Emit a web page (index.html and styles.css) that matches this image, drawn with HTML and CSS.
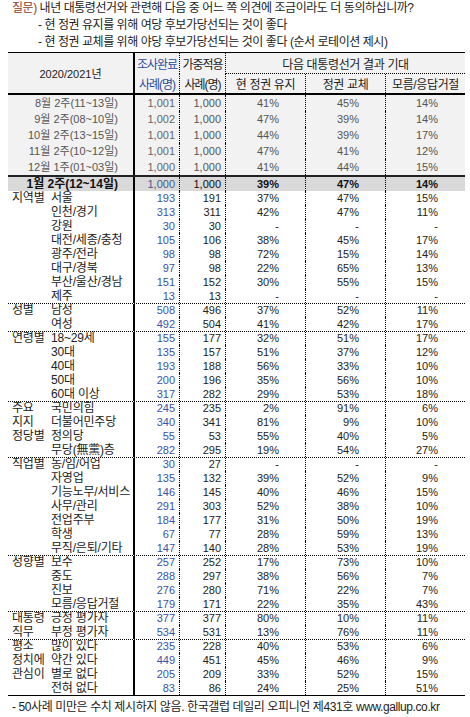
FILE: index.html
```html
<!DOCTYPE html>
<html lang="ko">
<head>
<meta charset="utf-8">
<link rel="stylesheet" href="styles.css">
</head>
<body>
<div class="q">
  <div><span class="tag">질문)</span> 내년 대통령선거와 관련해 다음 중 어느 쪽 의견에 조금이라도 더 동의하십니까?</div>
  <div class="ind">- 현 정권 유지를 위해 여당 후보가당선되는 것이 좋다</div>
  <div class="ind">- 현 정권 교체를 위해 야당 후보가당선되는 것이 좋다 (순서 로테이션 제시)</div>
</div>

<div class="tbl">
  <div class="head">
    <div class="h-lab">2020/2021년</div>
    <div class="h-n1 blue">조사완료</div>
    <div class="h-n2">가중적용</div>
    <div class="h-res">다음 대통령선거 결과 기대</div>
    <div class="h-n1 blue">사례(명)</div>
    <div class="h-n2">사례(명)</div>
    <div class="h-p d">현 정권 유지</div>
    <div class="h-p d">정권 교체</div>
    <div class="h-p">모름/응답거절</div>
  </div>

  <div class="row trend"><div class="c-lab">8월 2주(11~13일)</div><div class="c-n1">1,001</div><div class="c-n2">1,000</div><div class="c-p d">41%</div><div class="c-p d">45%</div><div class="c-p">14%</div></div>
  <div class="row trend"><div class="c-lab">9월 2주(08~10일)</div><div class="c-n1">1,002</div><div class="c-n2">1,000</div><div class="c-p d">47%</div><div class="c-p d">39%</div><div class="c-p">14%</div></div>
  <div class="row trend"><div class="c-lab">10월 2주(13~15일)</div><div class="c-n1">1,001</div><div class="c-n2">1,000</div><div class="c-p d">44%</div><div class="c-p d">39%</div><div class="c-p">17%</div></div>
  <div class="row trend"><div class="c-lab">11월 2주(10~12일)</div><div class="c-n1">1,001</div><div class="c-n2">1,000</div><div class="c-p d">47%</div><div class="c-p d">41%</div><div class="c-p">12%</div></div>
  <div class="row trend"><div class="c-lab">12월 1주(01~03일)</div><div class="c-n1">1,000</div><div class="c-n2">1,000</div><div class="c-p d">41%</div><div class="c-p d">44%</div><div class="c-p">15%</div></div>
  <div class="row cur"><div class="c-lab">1월 2주(12~14일)</div><div class="c-n1">1,000</div><div class="c-n2">1,000</div><div class="c-p d">39%</div><div class="c-p d">47%</div><div class="c-p">14%</div></div>

  <div class="row"><div class="c-lab"><span class="grp">지역별</span><span class="sub">서울</span></div><div class="c-n1">193</div><div class="c-n2">191</div><div class="c-p d">37%</div><div class="c-p d">47%</div><div class="c-p">15%</div></div>
  <div class="row"><div class="c-lab"><span class="grp"></span><span class="sub">인천/경기</span></div><div class="c-n1">313</div><div class="c-n2">311</div><div class="c-p d">42%</div><div class="c-p d">47%</div><div class="c-p">11%</div></div>
  <div class="row"><div class="c-lab"><span class="grp"></span><span class="sub">강원</span></div><div class="c-n1">30</div><div class="c-n2">30</div><div class="c-p d">-</div><div class="c-p d">-</div><div class="c-p">-</div></div>
  <div class="row"><div class="c-lab"><span class="grp"></span><span class="sub">대전/세종/충청</span></div><div class="c-n1">105</div><div class="c-n2">106</div><div class="c-p d">38%</div><div class="c-p d">45%</div><div class="c-p">17%</div></div>
  <div class="row"><div class="c-lab"><span class="grp"></span><span class="sub">광주/전라</span></div><div class="c-n1">98</div><div class="c-n2">98</div><div class="c-p d">72%</div><div class="c-p d">15%</div><div class="c-p">14%</div></div>
  <div class="row"><div class="c-lab"><span class="grp"></span><span class="sub">대구/경북</span></div><div class="c-n1">97</div><div class="c-n2">98</div><div class="c-p d">22%</div><div class="c-p d">65%</div><div class="c-p">13%</div></div>
  <div class="row"><div class="c-lab"><span class="grp"></span><span class="sub">부산/울산/경남</span></div><div class="c-n1">151</div><div class="c-n2">152</div><div class="c-p d">30%</div><div class="c-p d">55%</div><div class="c-p">15%</div></div>
  <div class="row"><div class="c-lab"><span class="grp"></span><span class="sub">제주</span></div><div class="c-n1">13</div><div class="c-n2">13</div><div class="c-p d">-</div><div class="c-p d">-</div><div class="c-p">-</div></div>

  <div class="row sep"><div class="c-lab"><span class="grp">성별</span><span class="sub">남성</span></div><div class="c-n1">508</div><div class="c-n2">496</div><div class="c-p d">37%</div><div class="c-p d">52%</div><div class="c-p">11%</div></div>
  <div class="row"><div class="c-lab"><span class="grp"></span><span class="sub">여성</span></div><div class="c-n1">492</div><div class="c-n2">504</div><div class="c-p d">41%</div><div class="c-p d">42%</div><div class="c-p">17%</div></div>

  <div class="row sep"><div class="c-lab"><span class="grp">연령별</span><span class="sub">18~29세</span></div><div class="c-n1">155</div><div class="c-n2">177</div><div class="c-p d">32%</div><div class="c-p d">51%</div><div class="c-p">17%</div></div>
  <div class="row"><div class="c-lab"><span class="grp"></span><span class="sub">30대</span></div><div class="c-n1">135</div><div class="c-n2">157</div><div class="c-p d">51%</div><div class="c-p d">37%</div><div class="c-p">12%</div></div>
  <div class="row"><div class="c-lab"><span class="grp"></span><span class="sub">40대</span></div><div class="c-n1">193</div><div class="c-n2">188</div><div class="c-p d">56%</div><div class="c-p d">33%</div><div class="c-p">10%</div></div>
  <div class="row"><div class="c-lab"><span class="grp"></span><span class="sub">50대</span></div><div class="c-n1">200</div><div class="c-n2">196</div><div class="c-p d">35%</div><div class="c-p d">56%</div><div class="c-p">10%</div></div>
  <div class="row"><div class="c-lab"><span class="grp"></span><span class="sub">60대 이상</span></div><div class="c-n1">317</div><div class="c-n2">282</div><div class="c-p d">29%</div><div class="c-p d">53%</div><div class="c-p">18%</div></div>

  <div class="row sep"><div class="c-lab"><span class="grp">주요</span><span class="sub">국민의힘</span></div><div class="c-n1">245</div><div class="c-n2">235</div><div class="c-p d">2%</div><div class="c-p d">91%</div><div class="c-p">6%</div></div>
  <div class="row"><div class="c-lab"><span class="grp">지지</span><span class="sub">더불어민주당</span></div><div class="c-n1">340</div><div class="c-n2">341</div><div class="c-p d">81%</div><div class="c-p d">9%</div><div class="c-p">10%</div></div>
  <div class="row"><div class="c-lab"><span class="grp">정당별</span><span class="sub">정의당</span></div><div class="c-n1">55</div><div class="c-n2">53</div><div class="c-p d">55%</div><div class="c-p d">40%</div><div class="c-p">5%</div></div>
  <div class="row"><div class="c-lab"><span class="grp"></span><span class="sub">무당(無黨)층</span></div><div class="c-n1">282</div><div class="c-n2">295</div><div class="c-p d">19%</div><div class="c-p d">54%</div><div class="c-p">27%</div></div>

  <div class="row sep"><div class="c-lab"><span class="grp">직업별</span><span class="sub">농/임/어업</span></div><div class="c-n1">30</div><div class="c-n2">27</div><div class="c-p d">-</div><div class="c-p d">-</div><div class="c-p">-</div></div>
  <div class="row"><div class="c-lab"><span class="grp"></span><span class="sub">자영업</span></div><div class="c-n1">135</div><div class="c-n2">132</div><div class="c-p d">39%</div><div class="c-p d">52%</div><div class="c-p">9%</div></div>
  <div class="row"><div class="c-lab"><span class="grp"></span><span class="sub">기능노무/서비스</span></div><div class="c-n1">146</div><div class="c-n2">145</div><div class="c-p d">40%</div><div class="c-p d">46%</div><div class="c-p">15%</div></div>
  <div class="row"><div class="c-lab"><span class="grp"></span><span class="sub">사무/관리</span></div><div class="c-n1">291</div><div class="c-n2">303</div><div class="c-p d">52%</div><div class="c-p d">38%</div><div class="c-p">10%</div></div>
  <div class="row"><div class="c-lab"><span class="grp"></span><span class="sub">전업주부</span></div><div class="c-n1">184</div><div class="c-n2">177</div><div class="c-p d">31%</div><div class="c-p d">50%</div><div class="c-p">19%</div></div>
  <div class="row"><div class="c-lab"><span class="grp"></span><span class="sub">학생</span></div><div class="c-n1">67</div><div class="c-n2">77</div><div class="c-p d">28%</div><div class="c-p d">59%</div><div class="c-p">13%</div></div>
  <div class="row"><div class="c-lab"><span class="grp"></span><span class="sub">무직/은퇴/기타</span></div><div class="c-n1">147</div><div class="c-n2">140</div><div class="c-p d">28%</div><div class="c-p d">53%</div><div class="c-p">19%</div></div>

  <div class="row sep"><div class="c-lab"><span class="grp">성향별</span><span class="sub">보수</span></div><div class="c-n1">257</div><div class="c-n2">252</div><div class="c-p d">17%</div><div class="c-p d">73%</div><div class="c-p">10%</div></div>
  <div class="row"><div class="c-lab"><span class="grp"></span><span class="sub">중도</span></div><div class="c-n1">288</div><div class="c-n2">297</div><div class="c-p d">38%</div><div class="c-p d">56%</div><div class="c-p">7%</div></div>
  <div class="row"><div class="c-lab"><span class="grp"></span><span class="sub">진보</span></div><div class="c-n1">276</div><div class="c-n2">280</div><div class="c-p d">71%</div><div class="c-p d">22%</div><div class="c-p">7%</div></div>
  <div class="row"><div class="c-lab"><span class="grp"></span><span class="sub">모름/응답거절</span></div><div class="c-n1">179</div><div class="c-n2">171</div><div class="c-p d">22%</div><div class="c-p d">35%</div><div class="c-p">43%</div></div>

  <div class="row sep"><div class="c-lab"><span class="grp">대통령</span><span class="sub">긍정 평가자</span></div><div class="c-n1">377</div><div class="c-n2">377</div><div class="c-p d">80%</div><div class="c-p d">10%</div><div class="c-p">11%</div></div>
  <div class="row"><div class="c-lab"><span class="grp">직무</span><span class="sub">부정 평가자</span></div><div class="c-n1">534</div><div class="c-n2">531</div><div class="c-p d">13%</div><div class="c-p d">76%</div><div class="c-p">11%</div></div>

  <div class="row sep"><div class="c-lab"><span class="grp">평소</span><span class="sub">많이 있다</span></div><div class="c-n1">235</div><div class="c-n2">228</div><div class="c-p d">40%</div><div class="c-p d">53%</div><div class="c-p">6%</div></div>
  <div class="row"><div class="c-lab"><span class="grp">정치에</span><span class="sub">약간 있다</span></div><div class="c-n1">449</div><div class="c-n2">451</div><div class="c-p d">45%</div><div class="c-p d">46%</div><div class="c-p">9%</div></div>
  <div class="row"><div class="c-lab"><span class="grp">관심이</span><span class="sub">별로 없다</span></div><div class="c-n1">205</div><div class="c-n2">209</div><div class="c-p d">33%</div><div class="c-p d">52%</div><div class="c-p">15%</div></div>
  <div class="row"><div class="c-lab"><span class="grp"></span><span class="sub">전혀 없다</span></div><div class="c-n1">83</div><div class="c-n2">86</div><div class="c-p d">24%</div><div class="c-p d">25%</div><div class="c-p">51%</div></div>
</div>

<div class="foot">- 50사례 미만은 수치 제시하지 않음. 한국갤럽 데일리 오피니언 제431호 www.gallup.co.kr</div>
</body>
</html>
```

FILE: styles.css
```css
* { box-sizing: border-box; }

body {
  margin: 0;
  background: #fff;
  color: #222;
  font-family: "Liberation Sans", "Noto Sans CJK KR", sans-serif;
  font-size: 11px;
}

.q {
  height: 52px;
  padding-left: 12px;
  font-size: 12px;
  line-height: 17px;
  letter-spacing: -0.45px;
  white-space: nowrap;
}

.q .ind { padding-left: 26px; }

.q .tag { color: #8e3b2e; }

.tbl {
  width: 457px;
  margin-left: 8px;
  border-top: 1px solid #000;
  border-bottom: 1px solid #000;
}

.head,
.row {
  display: grid;
  grid-template-columns: 127px 45px 46px 80px 80px 79px;
}

.head {
  grid-template-rows: 21px 19px;
  background: #f2f2f2;
  border-bottom: 2px solid #000;
  font-size: 12px;
  letter-spacing: -0.35px;
  white-space: nowrap;
}

.head > div {
  display: flex;
  align-items: center;
  justify-content: center;
}

.h-lab {
  grid-row: 1 / 3;
  border-right: 2px solid #000;
  font-size: 11px;
  letter-spacing: 0;
}

.h-n1,
.h-n2 {
  border-right: 1px dotted #000;
  letter-spacing: -1px;
}

.h-res {
  grid-column: 4 / 7;
  border-bottom: 1px dotted #000;
}

.h-p.d { border-right: 1px dotted #000; }

.blue { color: #2a4a9c; }

.row {
  height: 14px;
  line-height: 14px;
  white-space: nowrap;
}

.row.sep {
  border-top: 1px dotted #000;
  line-height: 12px;
}

.c-lab {
  display: flex;
  padding-left: 4px;
  border-right: 2px solid #000;
  font-size: 12px;
  letter-spacing: -0.2px;
}

.grp {
  flex: none;
  width: 39px;
}

.c-n1 {
  text-align: right;
  padding-right: 4px;
  border-right: 1px dotted #000;
  color: #3a52a6;
}

.c-n2 {
  text-align: right;
  padding-right: 4px;
  border-right: 1px dotted #000;
}

.c-p {
  text-align: right;
  padding-right: 27px;
}

.c-p.d {
  border-right: 1px dotted #000;
  padding-right: 26px;
}

.row.trend {
  height: 16px;
  line-height: 16px;
  background: #f2f2f2;
  color: #555;
}

.row.trend .c-lab,
.row.cur .c-lab {
  justify-content: flex-end;
  padding-right: 15px;
  letter-spacing: 0;
}

.row.trend .c-lab { font-size: 11px; }

.row.trend .c-n1 { color: #666; }

.row.cur {
  height: 16px;
  line-height: 14px;
  border-top: 2px solid #222;
  background: #d9d9d9;
  color: #111;
}

.row.cur .c-lab,
.row.cur .c-p { font-weight: bold; }

.row.cur .c-n1 { color: #4a5a8c; }

.foot {
  padding: 4px 0 0 12px;
  font-size: 12px;
  line-height: 14px;
  letter-spacing: -0.4px;
}
```
